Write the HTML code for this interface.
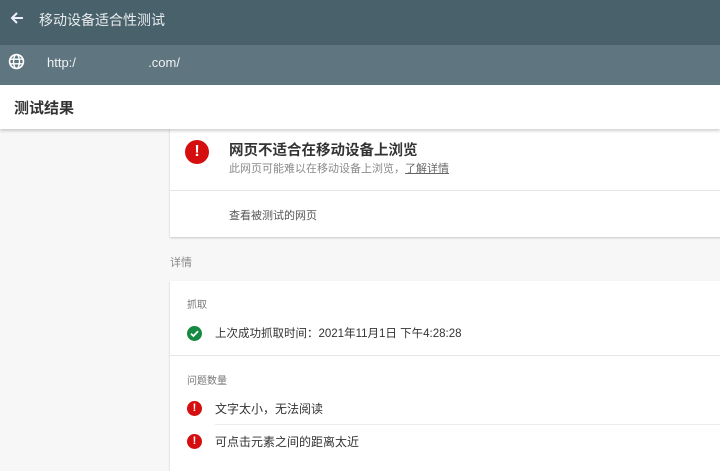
<!DOCTYPE html>
<html><head><meta charset="utf-8">
<style>
*{margin:0;padding:0;box-sizing:border-box}
body{width:720px;height:462px;overflow:hidden;background:#f7f7f7;font-family:"Liberation Sans","Noto Sans CJK SC",sans-serif;position:relative}
.top{position:absolute;left:0;top:0;width:720px;height:45px;background:#48616b}
.url{position:absolute;left:0;top:45px;width:720px;height:40px;background:#5f757f}
.hdr{position:absolute;left:0;top:85px;width:720px;height:44px;background:#fff;box-shadow:0 2px 3px rgba(0,0,0,.18);z-index:2}
.t{position:absolute;white-space:nowrap}
.card{position:absolute;left:170px;width:560px;background:#fff;box-shadow:0 1px 2px rgba(0,0,0,.2)}
.ic{position:absolute;border-radius:50%;color:#fff;font-weight:bold;text-align:center}
.red{background:#d50f0f}
</style></head><body>
<div class="top">
<svg style="position:absolute;left:10px;top:11px" width="14" height="14" viewBox="0 0 14 14"><path d="M13 7H2M7 2L2 7l5 5" stroke="#eef" stroke-width="2" fill="none"/></svg>
<div class="t" style="left:39px;top:10px;font-size:14px;color:#e8ecee">移动设备适合性测试</div>
</div>
<div class="url">
<svg style="position:absolute;left:8px;top:8px" width="17" height="17" viewBox="0 0 16 16"><circle cx="8" cy="8" r="6.5" stroke="#fff" stroke-width="1.6" fill="none"/><ellipse cx="8" cy="8" rx="2.8" ry="6.5" stroke="#fff" stroke-width="1.3" fill="none"/><path d="M1.5 5.8h13M1.5 10.2h13" stroke="#fff" stroke-width="1.3"/></svg>
<div class="t" style="left:47px;top:10px;font-size:13px;color:#f0f3f4">http:/&nbsp;&nbsp;&nbsp;&nbsp;&nbsp;&nbsp;&nbsp;&nbsp;&nbsp;&nbsp;&nbsp;&nbsp;&nbsp;&nbsp;&nbsp;&nbsp;&nbsp;&nbsp;&nbsp;&nbsp;.com/</div>
</div>
<div class="hdr"><div class="t" style="left:14px;top:12px;font-size:15px;font-weight:bold;color:#333">测试结果</div></div>

<div class="card" style="top:126px;height:111px">
<div class="ic red" style="left:15px;top:14px;width:24px;height:24px;font-size:16px;line-height:24px">!</div>
<div class="t" style="left:59px;top:13px;font-size:14.5px;font-weight:bold;color:#333">网页不适合在移动设备上浏览</div>
<div class="t" style="left:59px;top:34px;font-size:11px;color:#8a8a8a">此网页可能难以在移动设备上浏览，<span style="color:#666;text-decoration:underline">了解详情</span></div>
<div style="position:absolute;left:0;top:64px;width:100%;height:1px;background:#e6e6e6"></div>
<div class="t" style="left:59px;top:81px;font-size:11px;color:#555">查看被测试的网页</div>
</div>

<div class="t" style="left:170px;top:254px;font-size:11px;color:#888">详情</div>

<div class="card" style="top:281px;height:190px">
<div class="t" style="left:17px;top:15px;font-size:10px;color:#777">抓取</div>
<div class="ic" style="left:17px;top:45px;width:15px;height:15px;background:#178a41"><svg width="15" height="15" viewBox="0 0 15 15" style="position:absolute;left:0;top:0"><path d="M4 7.7l2.4 2.3L11 5.2" stroke="#fff" stroke-width="1.8" fill="none"/></svg></div>
<div class="t" style="left:45px;top:44px;font-size:11.5px;color:#333">上次成功抓取时间：2021年11月1日 下午4:28:28</div>
<div style="position:absolute;left:0;top:74px;width:100%;height:1px;background:#e6e6e6"></div>
<div class="t" style="left:17px;top:91px;font-size:10px;color:#777">问题数量</div>
<div class="ic red" style="left:17px;top:120px;width:15px;height:15px;font-size:11px;line-height:15px">!</div>
<div class="t" style="left:45px;top:119px;font-size:12px;color:#333">文字太小，无法阅读</div>
<div style="position:absolute;left:45px;top:143px;width:100%;height:1px;background:#ececec"></div>
<div class="ic red" style="left:17px;top:153px;width:15px;height:15px;font-size:11px;line-height:15px">!</div>
<div class="t" style="left:45px;top:152px;font-size:12px;color:#333">可点击元素之间的距离太近</div>
</div>
</body></html>
